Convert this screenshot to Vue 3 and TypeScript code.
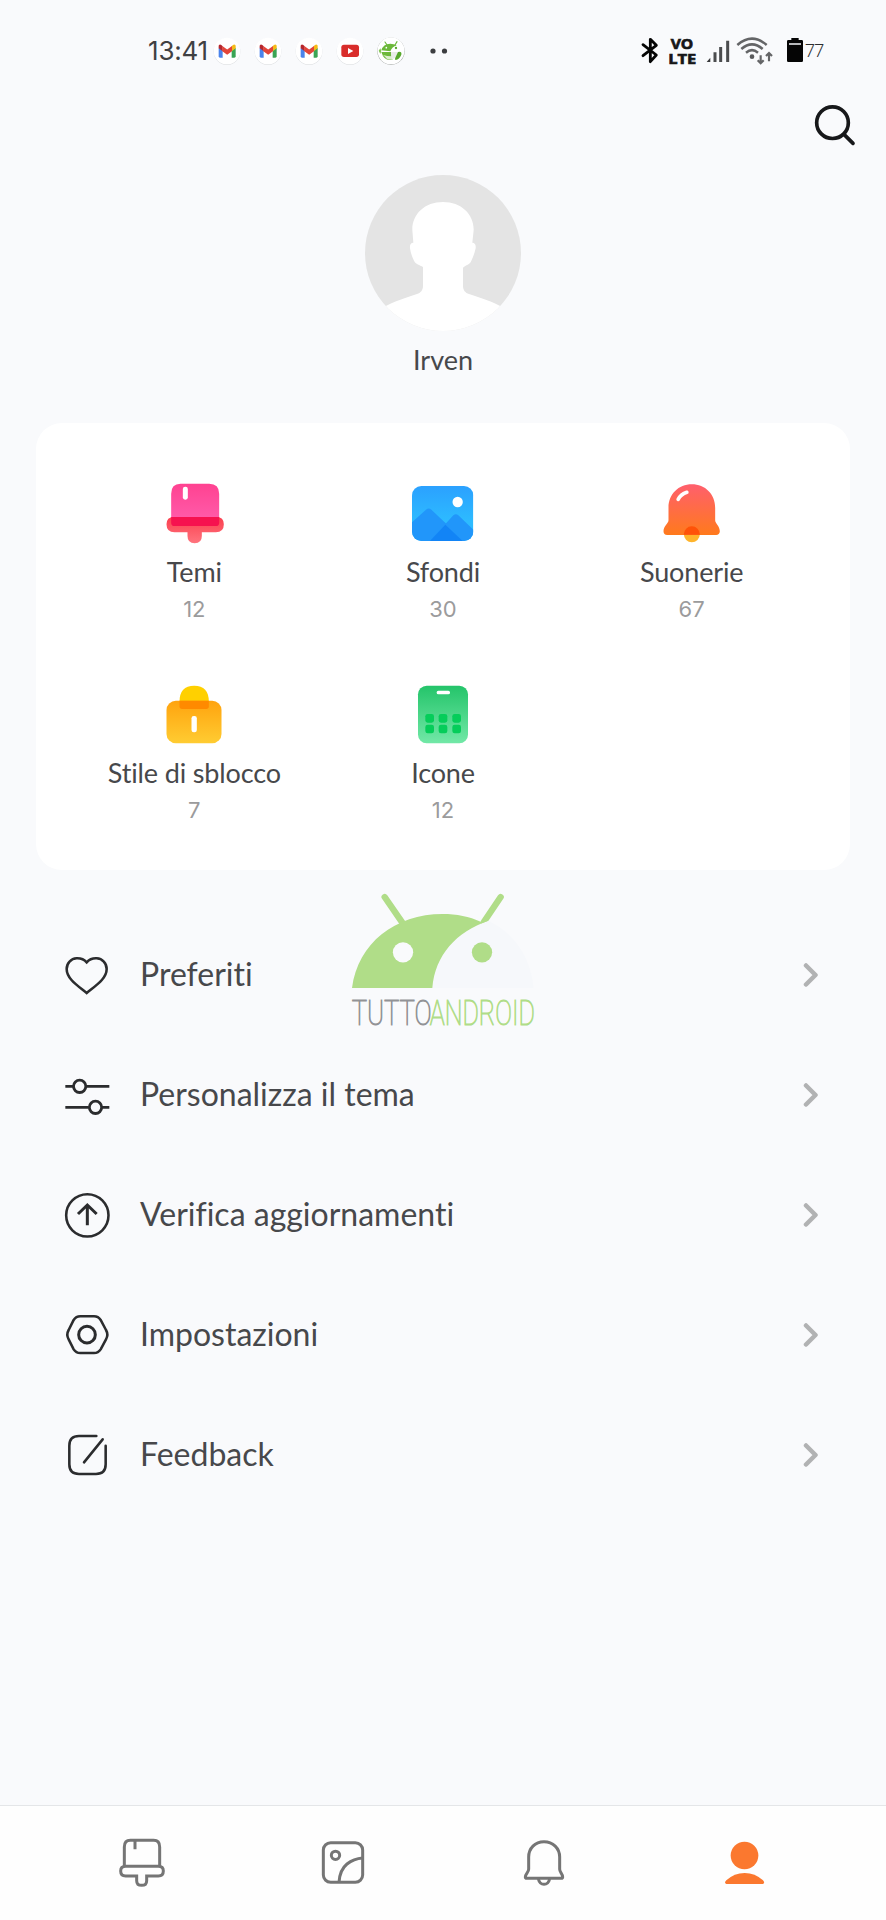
<script setup lang="ts">
interface Category {
  id: string
  name: string
  count: number
  viewBox: string
}

interface MenuEntry {
  id: string
  label: string
  viewBox: string
}

interface Tab {
  id: string
  label: string
  viewBox: string
}

const categories: Category[] = [
  { id: 'themes', name: 'Temi', count: 12, viewBox: '217.5 60 192 192' },
  { id: 'wallpapers', name: 'Sfondi', count: 30, viewBox: '963 60 192 192' },
  { id: 'ringtones', name: 'Suonerie', count: 67, viewBox: '178.5 60 192 192' },
  { id: 'lock', name: 'Stile di sblocco', count: 7, viewBox: '217.5 33 192 192' },
  { id: 'icons', name: 'Icone', count: 12, viewBox: '963 33 192 192' },
]

const menu: MenuEntry[] = [
  { id: 'favorites', label: 'Preferiti', viewBox: '68 63 144 144' },
  { id: 'customize', label: 'Personalizza il tema', viewBox: '68 423 144 144' },
  { id: 'updates', label: 'Verifica aggiornamenti', viewBox: '68 63 144 144' },
  { id: 'settings', label: 'Impostazioni', viewBox: '68 423 144 144' },
  { id: 'feedback', label: 'Feedback', viewBox: '68 783 144 144' },
]

const tabs: Tab[] = [
  { id: 'themes', label: 'Temi', viewBox: '103 132 168 168' },
  { id: 'wallpapers', label: 'Sfondi', viewBox: '705 132 168 168' },
  { id: 'ringtones', label: 'Suonerie', viewBox: '108 132 168 168' },
  { id: 'profile', label: 'Profilo', viewBox: '710 132 168 168' },
]

const mails = [1, 2, 3]
</script>

<template>
  <div class="screen">
    <header class="status">
      <span class="clock">13:41</span>
      <div class="notifications">
        <svg v-for="m in mails" :key="m" class="badge" viewBox="249 52 84 84">
          <circle cx="291" cy="95.500" r="40" fill="#d9dbde" />
          <circle cx="291" cy="94" r="40" fill="#fff" />
          <path d="M266 84v26q0 4 4 4h8V92z" fill="#4a84ec" />
          <path d="M317 84v26q0 4-4 4h-8V92z" fill="#3aa455" />
          <path d="M305 80l4-4q4-3 7 0 1 1 1 4v6l-12 9z" fill="#f5bb16" />
          <path d="M278 80l-4-4q-4-3-7 0-1 1-1 4v6l12 9z" fill="#b5262c" />
          <path d="M277 79l14.500 10.500L306 79v15.500L291.500 105 277 94.500z" fill="#e2453a" />
        </svg>
        <svg class="badge" viewBox="619 52 84 84">
          <circle cx="661" cy="95.500" r="40" fill="#d9dbde" />
          <circle cx="661" cy="94" r="40" fill="#fff" />
          <rect x="635" y="75" width="53" height="37" rx="8" fill="#d92d2b" />
          <path d="M655 85v18l16-9z" fill="#fff" />
        </svg>
        <svg class="badge" viewBox="742 50 84 84">
          <circle cx="784" cy="92.500" r="41" fill="#9a9d9a" />
          <circle cx="784" cy="91.500" r="40.500" fill="#fff" />
          <path d="M755 90q5-19 27-20 10 0 19 5-14 5-19 18z" fill="#6cb83a" />
          <path d="M766 65l6 9M802 64l-6 10" stroke="#6cb83a" stroke-width="3.500" stroke-linecap="round" />
          <circle cx="770" cy="82" r="2.500" fill="#fff" />
          <circle cx="799" cy="83" r="3.500" fill="#57a82c" />
          <path d="M755 95h29q0 13 5 23-25 7-34-23z" fill="#6cb83a" />
          <path d="M784 95h28v10l-24 12q-4-11-4-22z" fill="#e9ece8" />
          <path d="M805 95q12-3 10 8-6 14-17 16-4-1-1-7z" fill="#57a82c" />
          <path d="M747 91l5-7 3 8-3 9z" fill="#83c653" />
          <path d="M760 104q12 4 26 4l3 10q-18 1-22-8z" fill="#fff" opacity=".75" />
        </svg>
        <svg class="more" viewBox="0 0 18 6">
          <circle cx="3" cy="3" r="2.600" fill="#3c3e40" />
          <circle cx="14.500" cy="3" r="2.600" fill="#3c3e40" />
        </svg>
      </div>
      <div class="system">
        <svg class="bluetooth" viewBox="60 48 60 90">
          <path d="M69 74l40 31-18 20V58l18 18-40 31" fill="none" stroke="#050505" stroke-width="8.500" stroke-linejoin="round" stroke-linecap="round" />
        </svg>
        <svg class="volte" viewBox="144 48 84 90">
          <text x="152" y="88" textLength="68" lengthAdjust="spacingAndGlyphs">VO</text>
          <text x="145" y="132" textLength="84" lengthAdjust="spacingAndGlyphs">LTE</text>
        </svg>
        <svg class="signal" viewBox="258 48 72 90">
          <path d="M260 126l11-13v13z" fill="#38393b" />
          <path d="M285 126V97M302 126V81M323 126V62" stroke="#4b4c4e" stroke-width="9" />
        </svg>
        <svg class="wifi" viewBox="348 48 114 90" fill="none" stroke="#646567" stroke-width="7.500">
          <path d="M352 75q44-38 88 0M364 87q32-28 64 0M378 98q18-15 36 0" />
          <circle cx="396" cy="110" r="7" fill="#58595b" stroke="none" />
          <path d="M422 106v23M413 121l9 9 9-9M447 124v-23M438 108l9-9 9 9" stroke-width="6.500" />
        </svg>
        <svg class="battery" viewBox="498 48 54 90">
          <path d="M514 54h22v6h9q4 0 4 4v58q0 4-4 4h-40q-4 0-4-4V64q0-4 4-4h9z" fill="#050505" />
          <path d="M507 72h36" stroke="#b7b9bb" stroke-width="6" />
        </svg>
        <span class="level">77</span>
      </div>
    </header>

    <div class="tools">
      <svg class="search" viewBox="570 240 144 144">
        <circle cx="637.500" cy="308" r="47.500" />
        <path d="M672 343l27 27" stroke-linecap="round" />
      </svg>
    </div>

    <section class="profile">
      <svg class="avatar" viewBox="45 45 468 468">
        <defs>
          <clipPath id="avatar-clip"><circle cx="279" cy="279" r="234" /></clipPath>
        </defs>
        <g clip-path="url(#avatar-clip)">
          <path d="M45 45h468v468H45z" fill="#e4e4e4" />
          <path
            d="M279 126c-55 0-93 37-92 84l3 38c-8 0-11 6-10 17 2 15 7 27 12 37 5 11 17 12 27 19v56c0 14-7 21-18 25-37 12-68 22-101 40v80h358v-80c-32-18-64-28-101-40-11-4-18-11-18-25v-54c9-9 20-8 25-21 5-11 10-22 13-37 1-11-2-17-10-17l4-38c1-47-37-84-92-84z"
            fill="#fff"
          />
        </g>
      </svg>
      <h1 class="user">Irven</h1>
    </section>

    <section class="card">
      <div v-for="item in categories" :key="item.id" class="category">
        <svg class="category-icon" :viewBox="item.viewBox">
          <template v-if="item.id === 'themes'">
            <defs>
              <linearGradient id="pink" x1="0" y1="0" x2="0" y2="1">
                <stop offset="0" stop-color="#ff4291" />
                <stop offset=".8" stop-color="#ff5aa8" />
              </linearGradient>
              <linearGradient id="coral" x1="0" y1="0" x2="0" y2="1">
                <stop offset="0" stop-color="#fb3f4f" />
                <stop offset="1" stop-color="#ff747e" />
              </linearGradient>
            </defs>
            <path d="M273 71h86q30 0 30 30v97H245v-97q0-30 28-30z" fill="url(#pink)" />
            <path d="M253 171h128q22 0 22 22 0 24-24 24h-42v11q0 22-21.500 22T294 228v-11h-39q-24 0-24-24 0-22 22-22z" fill="url(#coral)" />
            <path d="M245 171h144v17q0 10-10 10H255q-10 0-10-10z" fill="#f6124f" />
            <rect x="280" y="80" width="15" height="39" rx="7" fill="#fff" />
          </template>
          <template v-else-if="item.id === 'wallpapers'">
            <defs>
              <linearGradient id="sky" x1="0" y1="0" x2="0" y2="1">
                <stop offset="0" stop-color="#2ba1ff" />
                <stop offset=".65" stop-color="#2dbbff" />
              </linearGradient>
              <clipPath id="photo"><rect x="966" y="78" width="184" height="165" rx="28" /></clipPath>
            </defs>
            <g clip-path="url(#photo)">
              <path d="M966 78h184v165H966z" fill="url(#sky)" />
              <path d="M966 187l42-38q8-7 16 0l100 94H966z" fill="#2196fa" />
              <path d="M1150 209l-45-43q-7-7-15 0l-70 77h130z" fill="#2196fa" />
              <path d="M1066 194l-46 49h98z" fill="#1284f6" />
            </g>
            <circle cx="1103" cy="126" r="15.500" fill="#fff" />
          </template>
          <template v-else-if="item.id === 'ringtones'">
            <defs>
              <linearGradient id="bell" x1="0" y1="0" x2="0" y2="1">
                <stop offset="0" stop-color="#ff5f6d" />
                <stop offset="1" stop-color="#ff7a1c" />
              </linearGradient>
              <clipPath id="bell-base"><path d="M240 190h70v34h-70z" /></clipPath>
            </defs>
            <circle cx="274" cy="223" r="24" fill="#ffb42b" />
            <path d="M274 73c40 0 70 30 70 70v38c0 10 14 17 14 33 0 7-5 11-11 11H200c-7 0-11-4-11-11 0-16 15-23 15-33v-38c0-40 30-70 70-70z" fill="url(#bell)" />
            <circle cx="274" cy="223" r="24" fill="#ff5208" clip-path="url(#bell-base)" />
            <path d="M233 118q8-15 26-21" fill="none" stroke="#fff" stroke-width="11" stroke-linecap="round" />
          </template>
          <template v-else-if="item.id === 'lock'">
            <defs>
              <linearGradient id="gold" x1="0" y1="0" x2="0" y2="1">
                <stop offset="0" stop-color="#ffa30e" />
                <stop offset="1" stop-color="#ffcc32" />
              </linearGradient>
            </defs>
            <path d="M270 95q0-48 44-48t44 48z" fill="#ffd000" />
            <rect x="231" y="92" width="165" height="128" rx="28" fill="url(#gold)" />
            <path d="M270 92h88v17q0 8-8 8h-72q-8 0-8-8z" fill="#ff8a00" />
            <rect x="306" y="138" width="16" height="49" rx="7" fill="#fff" />
          </template>
          <template v-else>
            <defs>
              <linearGradient id="mint" x1="0" y1="0" x2="0" y2="1">
                <stop offset="0" stop-color="#24c46a" />
                <stop offset="1" stop-color="#72e8a7" />
              </linearGradient>
            </defs>
            <rect x="984" y="47" width="150" height="173" rx="26" fill="url(#mint)" />
            <rect x="1040" y="62" width="40" height="11" rx="5" fill="#fff" />
            <g fill="#05cd5a">
              <rect x="1006" y="132" width="26" height="26" rx="7" />
              <rect x="1046" y="132" width="26" height="26" rx="7" />
              <rect x="1087" y="132" width="26" height="26" rx="7" />
              <rect x="1006" y="164" width="26" height="26" rx="7" />
              <rect x="1046" y="164" width="26" height="26" rx="7" />
              <rect x="1087" y="164" width="26" height="26" rx="7" />
            </g>
          </template>
        </svg>
        <span class="category-name">{{ item.name }}</span>
        <span class="category-count">{{ item.count }}</span>
      </div>
    </section>

    <section class="menu">
      <div v-for="entry in menu" :key="entry.id" class="entry">
        <svg class="entry-icon" :viewBox="entry.viewBox">
          <path
            v-if="entry.id === 'favorites'"
            d="M139 97c-8-9-19-12.500-30-12-17 1-30 14-30 32 0 29 32 49 60 72 28-23 60-43 60-72 0-18-13-31-30-32-11-.5-22 3-30 12z"
          />
          <g v-else-if="entry.id === 'customize'" stroke-width="8.500">
            <path d="M75 469h24M137 469h70M75 532h70M185 532h22" />
            <circle cx="118" cy="469" r="18.500" />
            <circle cx="165.500" cy="532" r="18.500" />
          </g>
          <g v-else-if="entry.id === 'updates'">
            <circle cx="141" cy="136" r="63.500" />
            <path d="M141 166v-60M113 132l28-27 28 27" stroke-width="9" />
          </g>
          <g v-else-if="entry.id === 'settings'">
            <path d="M120 439h41q13 0 20 11l16 30q8 14 0 28l-16 30q-7 11-20 11h-41q-13 0-20-11l-15-30q-8-14 0-28l15-30q7-11 20-11z" />
            <circle cx="140" cy="494" r="25" stroke-width="9" />
          </g>
          <g v-else stroke-linecap="round">
            <path d="M168 798h-52q-29 0-29 29v56q0 29 29 29h51q29 0 29-29v-56" />
            <path d="M131 877l56-69" />
          </g>
        </svg>
        <span class="entry-label">{{ entry.label }}</span>
        <svg class="chevron" viewBox="0 0 16 26"><path d="M3 3.500l9.500 9.500L3 22.500" /></svg>
      </div>

      <svg class="watermark" viewBox="18 24 582 426">
        <path d="M134 51l55 80M482 51l-50 74" stroke="#b0dd88" stroke-width="19" stroke-linecap="round" />
        <path d="M277 324C285 224 350 155 445 122c82 40 127 112 136 202z" fill="#f6f8fb" />
        <path d="M36 324C54 190 165 102 308 102c42 0 80 8 114 23l23-3C350 155 285 224 277 324z" fill="#b0dd88" />
        <circle cx="189" cy="217" r="30.500" fill="#f9fafc" />
        <circle cx="426" cy="217" r="30.500" fill="#b0dd88" />
        <text class="mark-a" x="35" y="434" textLength="240" lengthAdjust="spacingAndGlyphs">TUTTO</text>
        <text class="mark-b" x="269" y="434" textLength="316" lengthAdjust="spacingAndGlyphs">ANDROID</text>
      </svg>
    </section>

    <nav class="tabs">
      <a v-for="tab in tabs" :key="tab.id" class="tab" :aria-label="tab.label">
        <svg class="tab-icon" :viewBox="tab.viewBox">
          <g v-if="tab.id === 'themes'">
            <path d="M134 229v-58q0-20 18-20h70q18 0 18 20v58M166 153v25" />
            <path d="M138 229h98q15 0 15 14 0 15-15 15h-35v14q0 14-15 14t-15-14v-14h-33q-15 0-15-15 0-14 15-14z" />
          </g>
          <g v-else-if="tab.id === 'wallpapers'">
            <rect x="730" y="158" width="118" height="119" rx="22" />
            <circle cx="766.500" cy="196" r="12.500" />
            <path d="M777 277q2-37 24-55 20-16 47-18" />
          </g>
          <g v-else-if="tab.id === 'ringtones'">
            <path d="M192 155c-27 0-46 20-46 46v37c0 9-10 14-10 23q0 4 4 4h104q4 0 4-4c0-9-9-14-9-23v-37c0-26-20-46-47-46z" />
            <path d="M175 267q4 16 17 16t17-16" />
          </g>
          <g v-else class="active">
            <circle cx="792.500" cy="196.500" r="41.500" />
            <path d="M738 282q-8-3 0-11 24-22 55-22t55 22q7 8 0 11z" />
          </g>
        </svg>
      </a>
    </nav>
  </div>
</template>

<style>
body {
  background: #f9fafc;
}
</style>

<style scoped>
.screen {
  display: flex;
  flex-direction: column;
  width: 886px;
  height: 1920px;
  overflow: hidden;
  background: #f9fafc;
  color: #47484b;
  font-family: Lato, "Liberation Sans", sans-serif;
  font-variant-ligatures: none;
}

svg {
  display: block;
  flex: none;
}

.status {
  display: flex;
  align-items: center;
  box-sizing: border-box;
  height: 100px;
  padding: 2px 0 0 148px;
}

.clock {
  width: 65px;
  font-family: Inter, sans-serif;
  font-size: 26px;
  line-height: 32px;
  letter-spacing: -0.2px;
  color: #3f4042;
}

.notifications {
  display: flex;
  align-items: center;
  gap: 13px;
  width: 427px;
}

.badge {
  width: 28px;
  height: 28px;
}

.more {
  width: 18px;
  height: 6px;
  margin-left: 12px;
}

.system {
  display: flex;
  align-items: center;
}

.system svg {
  height: 30px;
}

.bluetooth {
  width: 20px;
}

.volte {
  width: 28px;
  margin-left: 8px;
  overflow: visible;
  font-family: "Open Sans", sans-serif;
  font-size: 45px;
  font-weight: 700;
  fill: #161617;
  stroke: #161617;
  stroke-width: 2;
}

.signal {
  width: 24px;
  margin-left: 10px;
}

.wifi {
  width: 38px;
  margin-left: 6px;
}

.battery {
  width: 18px;
  margin-left: 12px;
}

.level {
  margin-left: 1px;
  font-family: Roboto, sans-serif;
  font-size: 18px;
  font-weight: 300;
  line-height: 24px;
  letter-spacing: -0.7px;
  color: #2c2d2f;
}

.tools {
  display: flex;
  justify-content: flex-end;
  height: 75px;
  padding-right: 28px;
}

.search {
  width: 48px;
  height: 48px;
  fill: none;
  stroke: #17181a;
  stroke-width: 11;
}

.profile {
  display: flex;
  flex-direction: column;
  align-items: center;
  gap: 11px;
}

.avatar {
  width: 156px;
  height: 156px;
}

.user {
  margin: 0;
  font-size: 27px;
  font-weight: 400;
  line-height: 36px;
}

.card {
  display: grid;
  grid-template-columns: repeat(3, 1fr);
  row-gap: 57px;
  box-sizing: border-box;
  height: 447px;
  margin: 45px 36px 0;
  padding: 57px 34px 45px;
  border-radius: 26px;
  background: #fff;
}

.category {
  display: flex;
  flex-direction: column;
  align-items: center;
}

.category-icon {
  width: 64px;
  height: 64px;
}

.category-name {
  margin-top: 10px;
  font-size: 27px;
  line-height: 36px;
  letter-spacing: -0.15px;
}

.category-count {
  margin-top: 4px;
  font-family: Inter, sans-serif;
  font-size: 22px;
  line-height: 30px;
  color: #9b9b9c;
}

.menu {
  position: relative;
  margin-top: 45px;
}

.entry {
  display: flex;
  align-items: center;
  height: 120px;
  padding: 0 67px 0 62.700px;
}

.entry-icon {
  width: 48px;
  height: 48px;
  fill: none;
  stroke: #2b2c2e;
  stroke-width: 7.700;
}

.entry-label {
  flex: 1;
  margin-left: 29.300px;
  padding-bottom: 2px;
  font-size: 32px;
  line-height: 40px;
}

.chevron {
  width: 16px;
  height: 26px;
  fill: none;
  stroke: #b1b2b3;
  stroke-width: 4.500;
  stroke-linecap: round;
  stroke-linejoin: round;
}

.watermark {
  position: absolute;
  top: -27px;
  left: 346px;
  width: 194px;
  height: 142px;
  overflow: visible;
  font-family: Roboto, sans-serif;
  font-size: 104px;
  font-weight: 100;
}

.mark-a {
  fill: #929396;
  stroke: #929396;
  stroke-width: 3;
}

.mark-b {
  fill: #b0dd88;
  stroke: #b0dd88;
  stroke-width: 3;
}

.tabs {
  display: grid;
  grid-template-columns: repeat(4, 1fr);
  box-sizing: border-box;
  height: 115px;
  margin-top: auto;
  padding: 28px 41px 0 42px;
  border-top: 1px solid #e4e6e8;
  background: #fefefe;
}

.tab {
  display: flex;
  justify-content: center;
}

.tab-icon {
  width: 56px;
  height: 56px;
  fill: none;
  stroke: #757575;
  stroke-width: 9;
}

.active {
  fill: #fb782f;
  stroke: none;
}
</style>
